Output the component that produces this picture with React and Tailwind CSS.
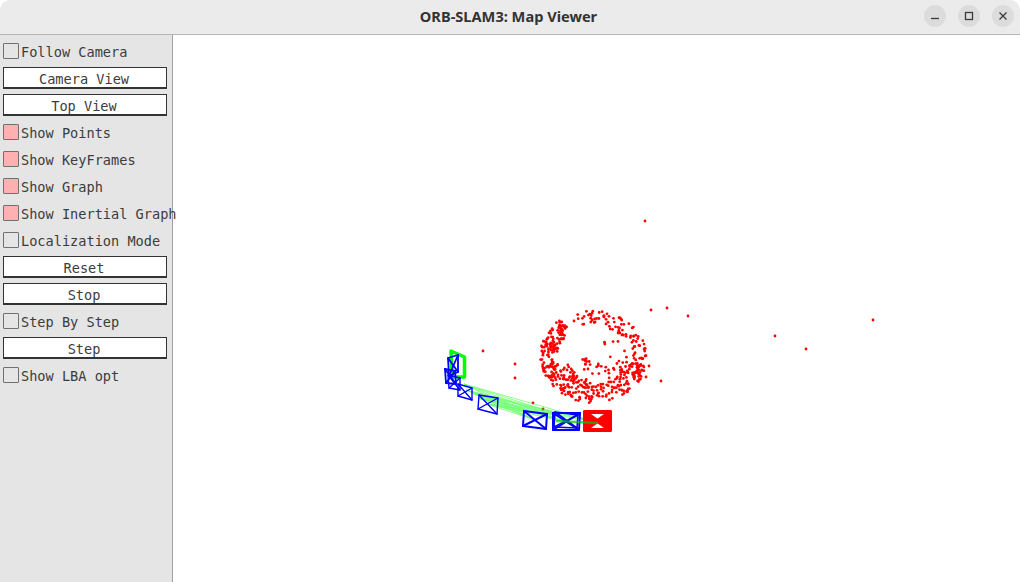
const mono = { fontFamily: '"DejaVu Sans Mono", monospace' };

// small seeded random, so the point cloud is the same on every run
const seeded = (a) => () => {
  a = (a + 0x6d2b79f5) | 0;
  let t = Math.imul(a ^ (a >>> 15), 1 | a);
  t = (t + Math.imul(t ^ (t >>> 7), 61 | t)) ^ t;
  return ((t ^ (t >>> 14)) >>> 0) / 4294967296;
};

const rand = seeded(19);

// arcs of the ball, angles in degrees (0 = right, 90 = down):
// [from, to, inner radius, outer radius, count]
const arcs = [
  [160, 222, 0.7, 1.02, 110],
  [222, 232, 0.82, 1.04, 24],
  [105, 160, 0.5, 1, 95],
  [60, 105, 0.6, 1, 45],
  [10, 60, 0.62, 1, 55],
  [10, 35, 0.84, 1, 25],
  [-25, 10, 0.72, 1, 24],
  [-70, -25, 0.68, 1, 34],
  [-112, -70, 0.72, 1.02, 30],
  [20, 170, 0.1, 0.7, 45],
  [-60, 20, 0.3, 0.75, 16],
];

const cloud = arcs.flatMap(([from, to, inner, outer, n]) =>
  Array.from({ length: n }, () => {
    const a = ((from + rand() * (to - from)) * Math.PI) / 180;
    const r = inner + rand() * (outer - inner);
    return [594 + Math.cos(a) * r * 53, 357 + Math.sin(a) * r * 46];
  })
);

const outliers = [
  [645, 221], [651, 310], [667, 308], [688, 316], [775, 336], [806, 349], [873, 320],
  [483, 351], [515, 364], [515, 378], [533, 403], [661, 381], [649, 366], [646, 377],
  [543, 409], [574, 321],
];

const keyframes = [
  { q: [[524, 411], [547, 414], [546, 429], [523, 426]], w: 2 },
  { q: [[553, 413], [580, 413], [579, 430], [553, 430]], w: 2 },
  { q: [[555, 412], [578, 415], [577, 428], [554, 427]], w: 1.6 },
  { q: [[479, 395], [498, 398], [497, 414], [478, 409]], w: 1.4 },
  { q: [[458, 384], [472, 388], [472, 400], [458, 396]], w: 1.4 },
  { q: [[448, 375], [460, 378], [460, 390], [449, 388]], w: 1.4 },
  { q: [[445, 369], [455, 371], [456, 384], [446, 383]], w: 1.8 },
  { q: [[448, 358], [458, 355], [458, 372], [449, 376]], w: 1.8 },
];

const Camera = ({ q, w, color, cross = true }) => (
  <g stroke={color} strokeWidth={w} fill="none" strokeLinejoin="round" strokeLinecap="round">
    <polygon points={q.map((p) => p.join(",")).join(" ")} />
    {cross && <line x1={q[0][0]} y1={q[0][1]} x2={q[2][0]} y2={q[2][1]} />}
    {cross && <line x1={q[1][0]} y1={q[1][1]} x2={q[3][0]} y2={q[3][1]} />}
  </g>
);

// covisibility graph: older keyframes to the newer ones
const graphFrom = [[464, 384], [466, 390], [472, 393], [478, 398], [487, 404]];
const graphTo = [[530, 413], [535, 420], [560, 415], [566, 422], [597, 422]];

const MapView = () => (
  <svg viewBox="173 35 847 547" className="w-full h-full block">
    {cloud.concat(outliers).map(([x, y], i) => (
      <circle key={i} cx={x.toFixed(1)} cy={y.toFixed(1)} r="1.4" fill="#ff0000" />
    ))}
    <g stroke="#00ff00" strokeWidth="0.8" opacity="0.55">
      {graphFrom.flatMap((a, i) =>
        graphTo.map((b, j) => <line key={`${i}-${j}`} x1={a[0]} y1={a[1]} x2={b[0]} y2={b[1]} />)
      )}
    </g>
    <Camera q={[[451, 351], [464.5, 357], [464.5, 377], [452, 377]]} w={3.5} color="#00ff00" cross={false} />
    {keyframes.map((k, i) => (
      <Camera key={i} q={k.q} w={k.w} color="#0000ff" />
    ))}
    <Camera q={[[585, 412], [610, 412], [610, 430], [585, 430]]} w={4} color="#ff0000" />
    <path d="M585 412L596 420L585 430ZM610 412L599 420L610 430Z" fill="#ff0000" />
    <line x1="556" y1="421" x2="598" y2="423" stroke="#00c800" strokeWidth="2.5" opacity="0.7" />
  </svg>
);

const Check = ({ label, on }) => (
  <div className="h-[27px] flex pl-[3px]">
    <div
      className={`w-4 h-4 mt-[5px] shrink-0 border border-[#707070] rounded-[1px] ${on ? "bg-[#ffb0b0]" : "bg-[#e5e5e5]"}`}
    />
    <span
      className="ml-[2px] pt-[8px] text-[13.6px] leading-none text-[#3c3c3c] whitespace-nowrap"
      style={mono}
    >
      {label}
    </span>
  </div>
);

const Btn = ({ label }) => (
  <div className="h-[27px] pl-[3px] pt-[2px]">
    <div
      className="w-[164px] h-[22px] bg-white border border-[#333333] border-b-2 pr-[2px] pt-[4px] flex items-center justify-center text-[13.6px] leading-none text-[#3c3c3c]"
      style={mono}
    >
      {label}
    </div>
  </div>
);

const WinBtn = ({ children }) => (
  <div className="w-[22px] h-[22px] rounded-full bg-[#dcdcdc] flex items-center justify-center">
    <svg width="12" height="12" viewBox="0 0 12 12" fill="none" stroke="#3a3a3a" strokeWidth="1.3">
      {children}
    </svg>
  </div>
);

export default function App() {
  return (
    <div className="w-[1020px] h-[582px] flex flex-col bg-white overflow-hidden">
      <div className="relative h-[35px] shrink-0 bg-[#ebebeb] border-b border-[#b5b5b5] flex items-center justify-center rounded-t-[10px]">
        <span
          className="text-[14.6px] font-bold text-[#333333] ml-[-3px]"
          style={{ fontFamily: '"Noto Sans", sans-serif' }}
        >
          ORB-SLAM3: Map Viewer
        </span>
        <div className="absolute right-[6px] top-[5px] flex gap-3">
          <WinBtn>
            <path d="M2 8.5h8" />
          </WinBtn>
          <WinBtn>
            <rect x="2.5" y="2.5" width="7" height="7" />
          </WinBtn>
          <WinBtn>
            <path d="M2.5 2.5l7 7M9.5 2.5l-7 7" />
          </WinBtn>
        </div>
      </div>
      <div className="flex-1 flex min-h-0">
        <div className="relative z-10 w-[173px] shrink-0 bg-[#e5e5e5] border-r border-[#a0a0a0] pt-[3px]">
          <Check label="Follow Camera" />
          <Btn label="Camera View" />
          <Btn label="Top View" />
          <Check label="Show Points" on />
          <Check label="Show KeyFrames" on />
          <Check label="Show Graph" on />
          <Check label="Show Inertial Graph" on />
          <Check label="Localization Mode" />
          <Btn label="Reset" />
          <Btn label="Stop" />
          <Check label="Step By Step" />
          <Btn label="Step" />
          <Check label="Show LBA opt" />
        </div>
        <div className="flex-1 min-w-0 bg-white">
          <MapView />
        </div>
      </div>
    </div>
  );
}
